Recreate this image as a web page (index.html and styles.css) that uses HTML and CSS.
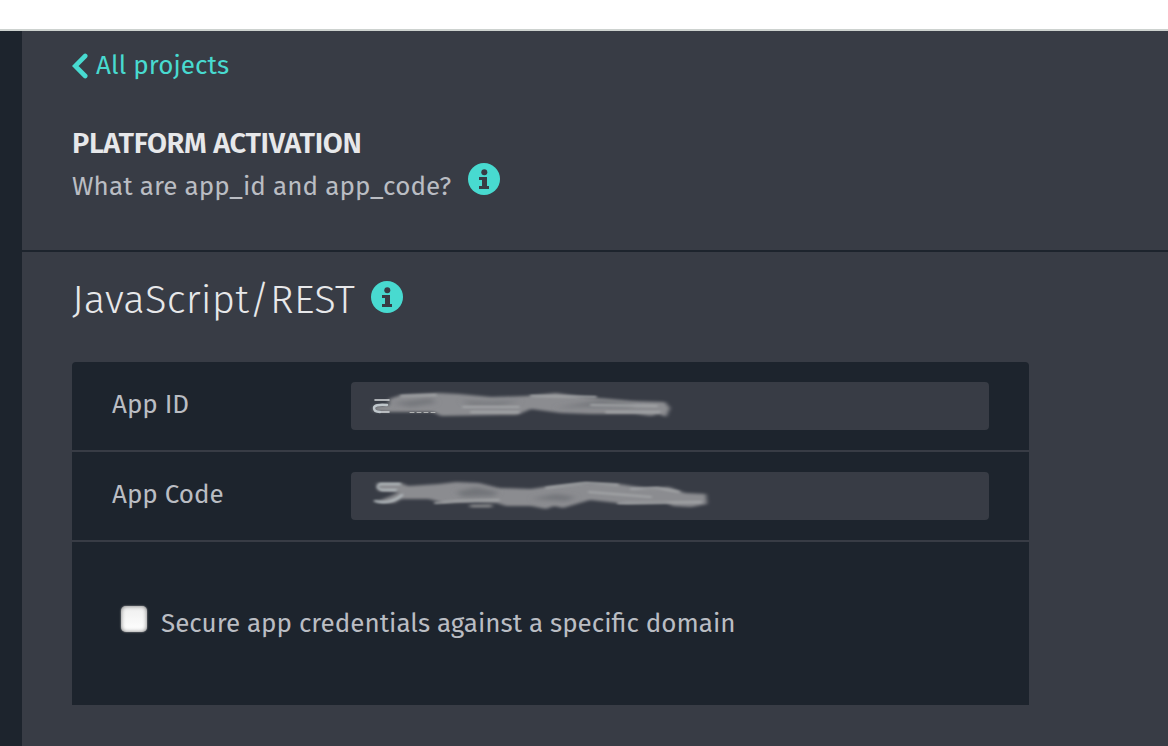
FILE: index.html
```html
<!DOCTYPE html>
<html lang="en">
<head>
<meta charset="utf-8">
<title>Platform activation</title>
<link rel="stylesheet" href="styles.css">
</head>
<body>
<div class="topbar"></div>
<div class="layout">
  <aside class="rail"></aside>
  <main class="content">
    <header class="project-header">
      <a class="back">
        <svg class="chevron" width="16" height="26" viewBox="0 0 16 26"><path d="M13.2 3 3.2 13l10 10" fill="none" stroke="currentColor" stroke-width="4.6" stroke-linecap="round" stroke-linejoin="miter"/></svg>
        <span class="back-label">All projects</span>
      </a>
      <h1 class="heading"><span>PLATFORM ACTIVATION</span></h1>
      <div class="question">
        <span class="question-label">What are app_id and app_code?</span>
        <svg class="info" width="32" height="32" viewBox="0 0 32 32"><circle cx="16" cy="16" r="16" fill="#48dad0"/><circle cx="16.3" cy="9.3" r="3" fill="#383c45"/><path d="M11 14h8v9h2v3H11v-3h3v-6h-3z" fill="#383c45"/></svg>
      </div>
    </header>
    <section class="platform">
      <div class="platform-title">
        <h2 class="title"><span>JavaScript/REST</span></h2>
        <svg class="info" width="32" height="32" viewBox="0 0 32 32"><circle cx="16" cy="16" r="16" fill="#48dad0"/><circle cx="16.3" cy="9.3" r="3" fill="#383c45"/><path d="M11 14h8v9h2v3H11v-3h3v-6h-3z" fill="#383c45"/></svg>
      </div>
      <div class="panel">
        <div class="row">
          <div class="label"><span class="label-id">App ID</span></div>
          <div class="field">
            <svg width="638" height="48" viewBox="0 0 638 48">
              <defs>
                <filter id="soft" x="-5%" y="-30%" width="110%" height="160%"><feGaussianBlur stdDeviation="1.9 1.5"/></filter>
                <filter id="line" filterUnits="userSpaceOnUse" x="0" y="0" width="638" height="48"><feGaussianBlur stdDeviation="1.8 0.9"/></filter>
                <filter id="haze" x="-10%" y="-50%" width="120%" height="200%"><feGaussianBlur stdDeviation="3 2"/></filter>
              </defs>
              <g filter="url(#soft)">
                <path d="M38 17 50 13 88 11 108 12 140 15 175 14 205 11 232 15 280 19 314 20 319 26 315 35 308 32 300 34 284 32 240 32 210 31 180 27 166 33 150 33 90 34 82 30 38 30 22 29 24 24 38 23z" fill="#8b8c90"/>
              </g>
              <g filter="url(#haze)" fill="#75777c"><path d="M42 21 80 16 85 21 60 25z"/><path d="M110 19 138 20 170 19 150 23 120 23z"/><path d="M204 26 250 18 285 22 280 25 230 25z"/></g>
              <g fill="none" stroke-linecap="round">
                <path d="M24 18 38 18M28 30 38 30" stroke="#d6d9dc" stroke-width="1.6"/>
                <path d="M36 23Q23 22 23 26 23 30 29 30" stroke="#bfc6cb" stroke-width="2.4"/>
                <path d="M50 14 85 13M112 25 168 25M120 30 168 30M180 14 245 15M240 23 306 24M255 30 309 30" stroke="#a3a5a7" stroke-width="1.8" filter="url(#line)"/>
                <path d="M59 30.5h28" stroke="#b0b2b2" stroke-width="1" stroke-dasharray="4 3"/>
              </g>
            </svg>
          </div>
        </div>
        <div class="row">
          <div class="label"><span class="label-code">App Code</span></div>
          <div class="field">
            <svg width="638" height="48" viewBox="0 0 638 48">
              <g filter="url(#soft)">
                <path d="M26 11 50 11 57 14 88 12 105 10 128 11 148 16 180 17 200 14 230 11 268 12 295 16 318 15 334 21 355 22 356 32 340 35 322 34 316 31 276 32 239 28 222 33 212 36 203 34 195 37 180 34 155 34 146 31 125 30 92 31 78 27 50 27 43 31 25 30 40 24 48 20 28 19z" fill="#8b8c90"/>
                <path d="M119 33h22v2h-22z" fill="#aaa"/>
              </g>
              <g filter="url(#haze)" fill="#727479"><path d="M105 20 125 15 147 20 143 24 112 25z"/><path d="M180 27 205 22 225 25 215 29z"/></g>
              <g fill="none" stroke-linecap="round">
                <path d="M49 12H29Q24 16 31 18L45 18M24 29Q40 33 51 23" stroke="#b8bfc3" stroke-width="2.2" filter="url(#line)"/>
                <path d="M84 31 105 29 148 28M195 16 235 11 267 13M280 17 306 16 328 20M238 20 300 25M267 31 350 30" stroke="#a3a5a7" stroke-width="1.8" filter="url(#line)"/>
              </g>
            </svg>
          </div>
        </div>
        <label class="secure">
          <span class="checkbox"></span>
          <span class="secure-label">Secure app credentials against a specific domain</span>
        </label>
      </div>
    </section>
  </main>
</div>
</body>
</html>
```
FILE: styles.css
```css
* { box-sizing: border-box; }

body {
  margin: 0;
  height: 746px;
  overflow: hidden;
  display: flex;
  flex-direction: column;
  background: #383c45;
  color: #babdc3;
  font: 26px/32px "Fira Sans", "Noto Sans", sans-serif;
  white-space: nowrap;
}

svg { display: block; flex: none; }

.topbar {
  height: 31px;
  flex: none;
  background: #fff;
  border-bottom: 2px solid #cdd2cf;
}

.layout { display: flex; flex: 1; }
.rail { width: 22px; flex: none; background: #1d242d; }
.content { flex: 1; min-width: 0; }

.project-header {
  height: 221px;
  padding: 18px 50px 0;
  border-bottom: 2px solid #1d242d;
}

.back { display: flex; align-items: center; gap: 8px; height: 34px; color: #48dad0; }
.back-label { letter-spacing: 0.08px; }

.heading {
  margin: 43px 0 0;
  font-size: 29px;
  font-weight: 600;
  line-height: 36px;
  letter-spacing: -0.35px;
  color: #e7e8ea;
}

.question { display: flex; gap: 16.6px; margin-top: 1px; }
.question-label { padding-top: 8px; letter-spacing: 0.1px; }

.platform { padding: 27px 50px 0; }
.platform-title { display: flex; gap: 16px; height: 83px; }
.platform-title .info { margin-top: 2px; }

.title {
  margin: 0;
  font: 300 40px/42px "Fira Sans", "Open Sans", sans-serif;
  letter-spacing: 0.2px;
  color: #e7e8ea;
}

.panel { width: 957px; height: 343px; border-radius: 4px 4px 0 0; background: #1d242d; }

.row {
  display: flex;
  height: 90px;
  padding: 20px 40px;
  border-bottom: 2px solid #383c45;
}

.label { width: 239px; padding-top: 7px; }
.field { width: 638px; height: 48px; border-radius: 4px; background: #383c45; }

.secure { display: flex; align-items: flex-start; gap: 14px; padding: 64px 49px 0; }
.checkbox {
  width: 26px;
  height: 26px;
  margin-top: -0.5px;
  border-radius: 5px;
  background: linear-gradient(#eee, #fff);
  box-shadow: 0 0 2px #aaa, inset 0 0 4px #777;
}
.secure-label { padding-top: 2px; }
```
